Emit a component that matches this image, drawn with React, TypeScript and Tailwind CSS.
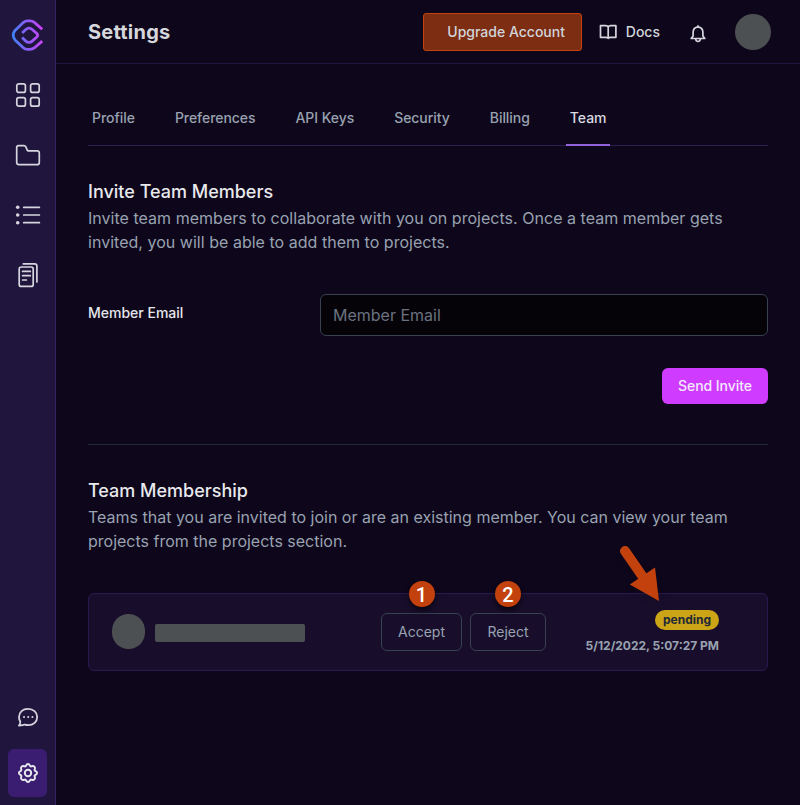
import type { ReactNode } from "react";

const tabs = ["Profile", "Preferences", "API Keys", "Security", "Billing", "Team"];

function Logo() {
  return (
    <svg width="34" height="34" viewBox="11 18.3 34 34" fill="none" strokeWidth="2.8" strokeLinejoin="round">
      <defs>
        <linearGradient id="brand" gradientUnits="userSpaceOnUse" x1="12" y1="36" x2="43" y2="34">
          <stop offset="0" stopColor="#3b82f6" />
          <stop offset="0.5" stopColor="#8b5cf6" />
          <stop offset="1" stopColor="#d040f8" />
        </linearGradient>
      </defs>
      <path
        stroke="url(#brand)"
        d="M42.2 29.6 34.6 22.9Q32.5 21.2 30 21.2H27.6Q25.2 21.2 23.3 22.9L15 30.8Q13.2 32.8 13.2 35.4T15 40.2L23.3 48Q25.2 49.7 27.6 49.7H30Q32.5 49.7 34.6 48L42.2 41.4"
      />
      <path
        stroke="url(#brand)"
        d="M22.1 33.3 25.8 29.8Q27.3 28.5 29 28.5T32.2 29.8L36.8 33.8Q38.6 35.5 36.8 37.3L32.2 41.4Q30.8 42.7 29 42.7T25.8 41.4L22.1 37.9"
      />
    </svg>
  );
}

function Stroke({ box, w, h, width = 1.7, color = "#d5d5de", children }: { box: string; w: number; h: number; width?: number; color?: string; children: ReactNode }) {
  return (
    <svg width={w} height={h} viewBox={box} fill="none" stroke={color} strokeWidth={width} strokeLinecap="round" strokeLinejoin="round">
      {children}
    </svg>
  );
}

function Sidebar() {
  return (
    <aside className="flex w-14 shrink-0 flex-col items-center border-r border-[#34235f] bg-[#20153d] pt-[18px] pb-2">
      <Logo />
      <nav className="mt-[29px] flex flex-col gap-8">
        <Stroke box="0 0 28 28" w={28} h={28}>
          <rect x="2.8" y="2.8" width="8.6" height="8.6" rx="2" />
          <rect x="16.6" y="2.8" width="8.6" height="8.6" rx="2" />
          <rect x="2.8" y="16.6" width="8.6" height="8.6" rx="2" />
          <rect x="16.6" y="16.6" width="8.6" height="8.6" rx="2" />
        </Stroke>
        <Stroke box="0 0 28 28" w={28} h={28}>
          <path d="M4.6 4.6H10Q11.2 4.6 11.8 5.7L13.1 8.9Q13.5 9.9 14.7 9.9H23Q25.3 9.9 25.3 12V21.4Q25.3 23.7 23 23.7H5Q2.7 23.7 2.7 21.4V6.5Q2.7 4.6 4.6 4.6Z" />
        </Stroke>
        <Stroke box="0 0 28 28" w={28} h={28}>
          <path d="M9.7 6.3H25.4M9.7 14H25.4M9.7 21.7H25.4" />
          <g fill="#d5d5de" stroke="none">
            <circle cx="3.7" cy="6.3" r="1.8" />
            <circle cx="3.7" cy="14" r="1.8" />
            <circle cx="3.7" cy="21.7" r="1.8" />
          </g>
        </Stroke>
        <Stroke box="0 0 28 28" w={28} h={28}>
          <rect x="5.2" y="6" width="14" height="19.4" rx="2" />
          <path d="M9.3 2.9H20.6Q22.9 2.9 22.9 5.2V21M8.6 10.4H16.3M8.6 14.7H16.3M8.6 19H12.4" />
        </Stroke>
      </nav>
      <div className="mt-auto flex flex-col items-center">
        <Stroke box="0 0 24 24" w={24} h={24} width={1.8}>
          <path d="M2.9 20.5Q4.3 19.6 4.3 16.6A8 8 0 0 1 3 12C3 7.2 6.8 3.9 12 3.9S21.2 7.3 21.2 12 17.4 20.1 12.3 20.1Q10.5 20.1 9 19.6Q7.5 20.5 2.9 20.5Z" />
          <path d="M8 12h.05M12.2 12h.05M16.4 12h.05" strokeWidth="2" />
        </Stroke>
        <div className="mt-5 flex h-12 w-[39px] items-center justify-center rounded-md bg-[#3a1c70]">
          <Stroke box="0 0 24 24" w={24} h={24} width={2} color="#e5e7eb">
            <path d="M10.2 4.4C11 2.5 13 2.5 13.8 4.4 14.2 5.3 14.9 5.6 15.8 5.2 17.8 4.4 19.6 6.2 18.8 8.2 18.4 9.1 18.7 9.8 19.6 10.2 21.5 11 21.5 13 19.6 13.8 18.7 14.2 18.4 14.9 18.8 15.8 19.6 17.8 17.8 19.6 15.8 18.8 14.9 18.4 14.2 18.7 13.8 19.6 13 21.5 11 21.5 10.2 19.6 9.8 18.7 9.1 18.4 8.2 18.8 6.2 19.6 4.4 17.8 5.2 15.8 5.6 14.9 5.3 14.2 4.4 13.8 2.5 13 2.5 11 4.4 10.2 5.3 9.8 5.6 9.1 5.2 8.2 4.4 6.2 6.2 4.4 8.2 5.2 9.1 5.6 9.8 5.3 10.2 4.4Z" />
            <circle cx="12" cy="12" r="3.2" />
          </Stroke>
        </div>
      </div>
    </aside>
  );
}

function Header() {
  return (
    <header className="flex h-16 shrink-0 items-center border-b border-[#20153d] pr-[29px] pl-8">
      <h1 className="mr-auto text-xl font-bold tracking-[0.22px] text-[#d6d7dc]">Settings</h1>
      <button className="flex h-[38px] w-[159px] items-center rounded-[3px] border border-[#c2410c] bg-[#7c2d12] pl-[23.5px] text-sm font-medium whitespace-nowrap text-[#d1d5db]">Upgrade Account</button>
      <div className="ml-[17px] flex items-center gap-2">
        <Stroke box="0 0 19 16" w={19} h={16}>
          <path d="M9.2 3Q8.5 1.7 6.8 1.7H1.5V13.3H6.8Q8.5 13.3 9.2 14.3Q9.9 13.3 11.6 13.3H16.9V1.7H11.6Q9.9 1.7 9.2 3ZM9.2 3V14" />
        </Stroke>
        <span className="text-sm font-medium text-[#d1d5db]">Docs</span>
      </div>
      <div className="mt-1 ml-7">
        <Stroke box="0 0 20 20" w={20} h={20}>
          <path d="M3.2 14.5H16.8L14.9 11.9V8Q14.6 3.4 10 2.8Q5.4 3.4 5.1 8V11.9Z" />
          <path d="M10 1.9V2.5M7.7 15.2Q8 17.5 10 17.5T12.3 15.2" />
        </Stroke>
      </div>
      <div className="ml-[27px] size-9 rounded-full bg-[#4d5053]" />
    </header>
  );
}

function Marker({ n }: { n: number }) {
  return (
    <span className="absolute -top-8 left-1/2 flex size-[26px] -translate-x-1/2 items-center justify-center rounded-full bg-[#c2410c] pt-px font-['Roboto',sans-serif] text-xl font-medium text-white shadow-md shadow-black/60">{n}</span>
  );
}

function Arrow() {
  return (
    <svg className="absolute -top-[52px] right-[103px] drop-shadow-md" width="48" height="62" viewBox="616 542 48 62">
      <path d="M625 551 645 580" stroke="#c2410c" strokeWidth="10" strokeLinecap="round" />
      <path d="M655 567.5 659 601 629.8 584.5Z" fill="#c2410c" />
    </svg>
  );
}

export default function App() {
  return (
    <div className="flex h-[805px] w-[800px] overflow-hidden bg-[#0e061b] font-['Inter',sans-serif] text-base">
      <Sidebar />
      <div className="flex min-w-0 flex-1 flex-col">
        <Header />
        <main className="px-8 pt-7">
          <nav className="flex h-[54px] gap-8 border-b border-[#2b1d50] tracking-[-0.05px]">
            {tabs.map((tab) => (
              <a key={tab} className={tab === "Team" ? "h-[54px] border-b-2 border-[#9163dc] px-1 pt-4 text-sm font-medium text-[#d9dae0]" : "px-1 pt-4 text-sm font-medium text-[#98a2b0]"}>{tab}</a>
            ))}
          </nav>
          <section className="pt-8">
            <h2 className="text-lg leading-7 font-medium text-[#e8e9ec]">Invite Team Members</h2>
            <p className="leading-6 tracking-[0.025px] text-[#98a2b0]">Invite team members to collaborate with you on projects. Once a team member gets invited, you will be able to add them to projects.</p>
            <div className="mt-10 flex justify-between">
              <label className="pt-[9px] text-sm font-medium text-[#e5e7eb]">Member Email</label>
              <input placeholder="Member Email" className="h-[42px] w-[448px] rounded-md border border-[#374151] bg-[#050208] px-3 text-base text-white placeholder:text-[#6b7280]" />
            </div>
            <div className="mt-8 flex justify-end">
              <button className="h-9 w-[106px] rounded-md bg-[#d03cff] text-sm font-medium tracking-[-0.06px] text-[#f3e8ff]">Send Invite</button>
            </div>
          </section>
          <section className="mt-10 border-t border-[#1f2937] pt-8">
            <h2 className="text-lg leading-7 font-medium text-[#e8e9ec]">Team Membership</h2>
            <p className="leading-6 text-[#98a2b0]">Teams that you are invited to join or are an existing member. You can view your team projects from the projects section.</p>
            <div className="relative mt-10 flex h-[78px] items-center rounded-md border border-[#281a4e] bg-[#180e2b] pr-12 pl-[23px]">
              <div className="-mt-0.5 h-[35px] w-[33px] rounded-full bg-[#4d5053]" />
              <div className="mt-0.5 ml-2.5 h-[18px] w-[150px] rounded-[2px] bg-[#4d5053]" />
              <div className="ml-[76px] flex gap-2">
                <div className="relative">
                  <button className="h-[38px] w-[81px] rounded-md border border-[#374151] text-sm text-[#98a2b0]">Accept</button>
                  <Marker n={1} />
                </div>
                <div className="relative">
                  <button className="h-[38px] w-[76px] rounded-md border border-[#374151] text-sm text-[#98a2b0]">Reject</button>
                  <Marker n={2} />
                </div>
              </div>
              <div className="ml-auto flex flex-col items-end gap-2">
                <span className="h-5 w-16 rounded-full bg-[#cca516] text-center text-xs leading-5 font-bold text-[#1f2937]">pending</span>
                <span className="text-xs font-bold whitespace-nowrap text-[#98a2b0]">5/12/2022, 5:07:27 PM</span>
              </div>
              <Arrow />
            </div>
          </section>
        </main>
      </div>
    </div>
  );
}
